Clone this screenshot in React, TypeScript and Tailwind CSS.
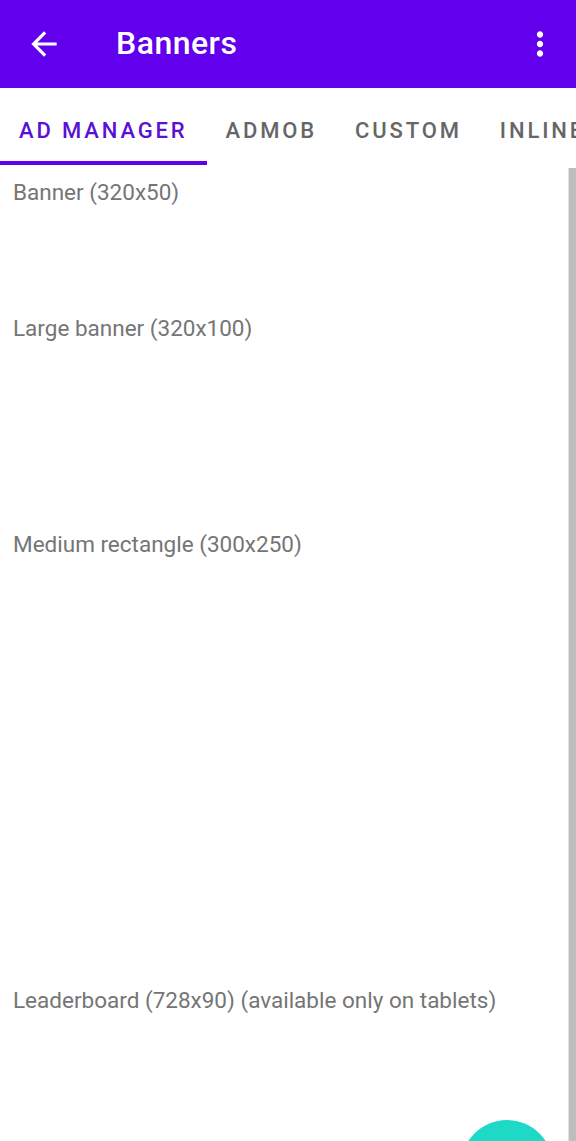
import React from "react";

const tabs = ["AD MANAGER", "ADMOB", "CUSTOM", "INLINE"];

const sections = [
  { label: "Banner (320x50)", space: "h-[104px]" },
  { label: "Large banner (320x100)", space: "h-[184px]" },
  { label: "Medium rectangle (300x250)", space: "h-[424px]" },
  { label: "Leaderboard (728x90) (available only on tablets)", space: "h-[160px]" },
];

function App() {
  return (
    <div
      className="relative w-[576px] h-[1141px] overflow-hidden bg-white flex flex-col"
      style={{ fontFamily: "Roboto, 'Noto Sans', sans-serif" }}
    >
      {/* --- App bar --- */}
      <div className="h-[88px] shrink-0 bg-[#6200ee] flex items-center pl-[25px] pr-[17px]">
        <svg width="38" height="38" viewBox="0 0 24 24" fill="#ffffff">
          <path d="M20 11H7.83l5.59-5.59L12 4l-8 8 8 8 1.41-1.41L7.83 13H20v-2z" />
        </svg>
        <div className="ml-[53px] text-white text-[32px] font-medium tracking-[0.015em] leading-none flex-1 pb-[2px]">
          Banners
        </div>
        <svg width="38" height="38" viewBox="0 0 24 24" fill="#ffffff">
          <path d="M12 8c1.1 0 2-.9 2-2s-.9-2-2-2-2 .9-2 2 .9 2 2 2zm0 2c-1.1 0-2 .9-2 2s.9 2 2 2 2-.9 2-2-.9-2-2-2zm0 6c-1.1 0-2 .9-2 2s.9 2 2 2 2-.9 2-2-.9-2-2-2z" />
        </svg>
      </div>

      {/* --- Tabs (last one runs off the edge, as in a scrollable tab row) --- */}
      <div className="h-[77px] shrink-0 flex overflow-hidden">
        {tabs.map((tab, idx) => (
          <div
            key={tab}
            className={
              idx === 0
                ? "shrink-0 h-full flex items-center px-[19px] border-b-[4px] border-[#6200ee] text-[#5b10d6] pt-[11px]"
                : "shrink-0 h-full flex items-center px-[19px] border-b-[4px] border-transparent text-[#666666] pt-[11px]"
            }
          >
            <span className="text-[22px] font-medium tracking-[0.13em] whitespace-nowrap">
              {tab}
            </span>
          </div>
        ))}
      </div>

      {/* --- Content --- */}
      <div className="flex-1 flex">
        <div className="flex-1 pt-[11px] pl-[13px]">
          {sections.map((s) => (
            <div key={s.label}>
              <div className="h-[32px] leading-[32px] text-[22.5px] text-[#757575] whitespace-nowrap">
                {s.label}
              </div>
              <div className={s.space}></div>
            </div>
          ))}
        </div>
        <div className="w-[8px] mt-[3px] bg-[#bdbdbd] border-l border-[#e0e0e0]"></div>
      </div>

      {/* --- FAB --- */}
      <div className="absolute left-[461px] top-[1120px] w-[92px] h-[92px] rounded-full bg-[#1dd9c6] shadow-md"></div>
    </div>
  );
}

export default App;
